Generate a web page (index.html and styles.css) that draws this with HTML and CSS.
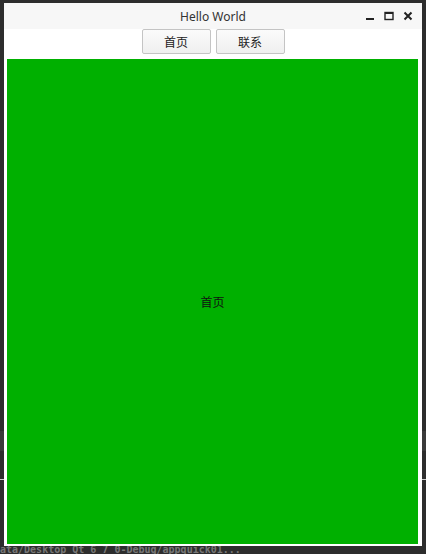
FILE: index.html
```html
<!DOCTYPE html>
<html>
<head>
<meta charset="utf-8">
<link rel="stylesheet" href="styles.css">
</head>
<body>
<div class="desktop">
  <div class="band"></div>
  <div class="rule"></div>
  <div class="term-line">ata/Desktop_Qt_6_7_0-Debug/appquick01...</div>
  <div class="window">
    <div class="titlebar">
      <span class="title">Hello World</span>
      <div class="controls">
        <svg width="10" height="10" viewBox="0 0 10 10"><rect x="1" y="7" width="8" height="2" fill="#222"/></svg>
        <svg width="10" height="10" viewBox="0 0 10 10"><rect x="1" y="1.5" width="8" height="7" fill="none" stroke="#222" stroke-width="1.4"/><rect x="1" y="1" width="8" height="2" fill="#222"/></svg>
        <svg width="10" height="10" viewBox="0 0 10 10"><path d="M1.5 1.5 L8.5 8.5 M8.5 1.5 L1.5 8.5" stroke="#222" stroke-width="2"/></svg>
      </div>
    </div>
    <div class="content">
      <div class="tabs">
        <button class="btn">首页</button>
        <button class="btn">联系</button>
      </div>
      <div class="page">首页</div>
    </div>
  </div>
</div>
</body>
</html>
```

FILE: styles.css
```css
html, body {
  margin: 0;
  padding: 0;
  background: #2d2d2d;
}
.desktop {
  position: relative;
  width: 426px;
  height: 554px;
  overflow: hidden;
  background: #2d2d2d;
}
.band {
  position: absolute;
  left: 0;
  right: 0;
  top: 431px;
  height: 20px;
  background: #3a3a3a;
}
.rule {
  position: absolute;
  left: 0;
  right: 0;
  top: 479px;
  height: 1px;
  background: #cfcfcf;
}
.term-line {
  position: absolute;
  left: 0;
  top: 546px;
  font-family: "DejaVu Sans Mono", monospace;
  font-weight: bold;
  font-size: 10px;
  line-height: 8px;
  height: 8px;
  color: #777;
  white-space: nowrap;
}
.window {
  position: absolute;
  left: 4px;
  top: 3px;
  width: 418px;
  height: 543px;
  background: #ffffff;
  display: flex;
  flex-direction: column;
}
.titlebar {
  height: 26px;
  flex: none;
  background: #f7f7f7;
  display: flex;
  align-items: center;
  justify-content: center;
  position: relative;
  font-family: "Noto Sans", "DejaVu Sans", sans-serif;
  font-size: 12px;
  color: #333;
}
.title {
  margin-top: 1px;
}
.controls {
  position: absolute;
  right: 9px;
  top: 8px;
  display: flex;
  gap: 9px;
}
.controls svg {
  display: block;
}
.content {
  flex: 1;
  display: flex;
  flex-direction: column;
  padding: 0 4px 2px 3px;
}
.tabs {
  display: flex;
  justify-content: center;
  gap: 5px;
  height: 25px;
  flex: none;
  margin-left: 1px;
}
.btn {
  width: 69px;
  height: 25px;
  border: 1px solid #c4c4c4;
  border-radius: 2px;
  background: linear-gradient(#fbfbfb, #efefef);
  font-family: "Noto Sans CJK SC", sans-serif;
  font-size: 12px;
  color: #222;
  padding: 0;
}
.page {
  flex: 1;
  margin-top: 5px;
  background: #00b000;
  display: flex;
  align-items: center;
  justify-content: center;
  font-family: "Noto Sans CJK SC", sans-serif;
  font-size: 12px;
  color: #111;
}
```
